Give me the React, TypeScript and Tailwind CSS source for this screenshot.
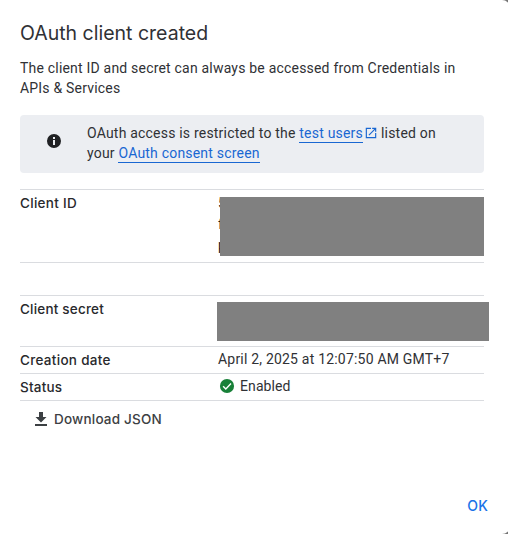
import type { ReactNode } from 'react';

const heading = "font-['Inter','Liberation_Sans',sans-serif]";

function Row({ label, className, labelClass, children }: { label?: string; className: string; labelClass?: string; children?: ReactNode }) {
  return (
    <div className={`flex border-t border-[#dadce0] ${className}`}>
      <div className={`w-[198px] shrink-0 text-[13.5px] font-medium leading-5 text-[#28292c] ${heading} ${labelClass ?? ''}`}>{label}</div>
      <div className="relative min-w-0 flex-1">{children}</div>
    </div>
  );
}

function Link({ children }: { children: ReactNode }) {
  return (
    <a href="#" className="inline-block h-5 border-b border-[#1967d2] leading-5 text-[#1967d2]">
      {children}
    </a>
  );
}

export default function App() {
  return (
    <div className="h-[534px] w-[508px] overflow-hidden bg-[#757575]">
      <div className="flex h-[534px] w-[510px] flex-col rounded-r-[8px] bg-white pl-5 pr-[26px] font-['Roboto','Liberation_Sans',sans-serif] text-[14px] leading-5 tracking-[0.2px] text-[#3c4043]">
        <h1 className={`mt-[19px] h-7 whitespace-nowrap text-[19.5px] font-normal leading-7 tracking-normal text-[#303135] ${heading}`}>
          OAuth client created
        </h1>
        <p className="mt-[11px] whitespace-nowrap text-[#303135]">
          The client ID and secret can always be accessed from Credentials in
          <br />
          APIs &amp; Services
        </p>

        <div className="mt-[17px] flex h-[58px] items-start rounded bg-[#eceef2]">
          <svg className="ml-[26px] mt-[18px] size-4" viewBox="0 0 24 24" fill="#202124">
            <path d="M12 1.5a10.5 10.5 0 1 0 0 21 10.5 10.5 0 0 0 0-21zm1.5 16.5h-3v-7.5h3v7.5zm0-9h-3V6h3v3z" />
          </svg>
          <p className="ml-[25px] mt-2 whitespace-nowrap text-[#303135]">
            <span className="flex h-5">
              <span className="whitespace-pre">OAuth access is restricted to the </span>
              <Link>test users</Link>
              <svg className="ml-px mt-[3px] size-[14px]" viewBox="0 0 24 24" fill="#1967d2">
                <path d="M19 19H5V5h7V3H3v18h18v-9h-2v7zM14 3v2h3.59l-9.83 9.83 1.41 1.41L19 6.41V10h2V3h-7z" />
              </svg>
              <span className="ml-[3px]">listed on</span>
            </span>
            <span className="flex h-5">
              <span className="whitespace-pre">your </span>
              <Link>OAuth consent screen</Link>
            </span>
          </p>
        </div>

        <div className="mt-4 flex flex-col">
          <Row label="Client ID" className="h-[73px]" labelClass="pt-[3px] tracking-[0.3px]">
            <div className="pt-[3px] leading-[21px] text-[#202124]">
              <div>5</div>
              <div>f</div>
              <div>p</div>
            </div>
            <div className="absolute left-[2px] top-[7px] h-[59px] w-[264px] bg-[#808080]" />
          </Row>
          <Row className="h-[33px]" />
          <Row label="Client secret" className="h-[51px]" labelClass="pt-[3px]">
            <div className="-ml-px mt-[6px] h-[39px] w-[272px] bg-[#808080]" />
          </Row>
          <Row label="Creation date" className="h-[27px]" labelClass="pt-[3px] tracking-[0.3px]">
            <div className="whitespace-nowrap pt-[2px] text-[#303135]">April 2, 2025 at 12:07:50 AM GMT+7</div>
          </Row>
          <Row label="Status" className="h-[28px] border-b" labelClass="pt-[3px]">
            <div className="flex items-center pt-[2px] text-[#303135]">
              <svg className="ml-px size-4" viewBox="0 0 24 24">
                <circle cx="12" cy="12" r="10.6" fill="#188038" />
                <path d="m6.2 12.4 4 4 7.8-8" fill="none" stroke="white" strokeWidth="2.1" />
              </svg>
              <span className="ml-[5px] tracking-[0.1px]">Enabled</span>
            </div>
          </Row>
        </div>

        <button className={`ml-[15px] mt-2 flex h-5 items-center self-start whitespace-nowrap text-[13.5px] font-medium leading-5 text-[#3c4043] ${heading}`}>
          <svg className="mr-[7px] h-[14px] w-[12px]" viewBox="0 0 12 14" fill="#3c4043">
            <path d="M4 0h4v5h3.5L6 10.5.5 5H4zM0 12h12v2H0z" />
          </svg>
          Download JSON
        </button>
        <button className={`mb-[18px] mr-[-4px] mt-auto h-5 self-end text-[14px] font-medium leading-5 text-[#1a73e8] ${heading}`}>OK</button>
      </div>
    </div>
  );
}
